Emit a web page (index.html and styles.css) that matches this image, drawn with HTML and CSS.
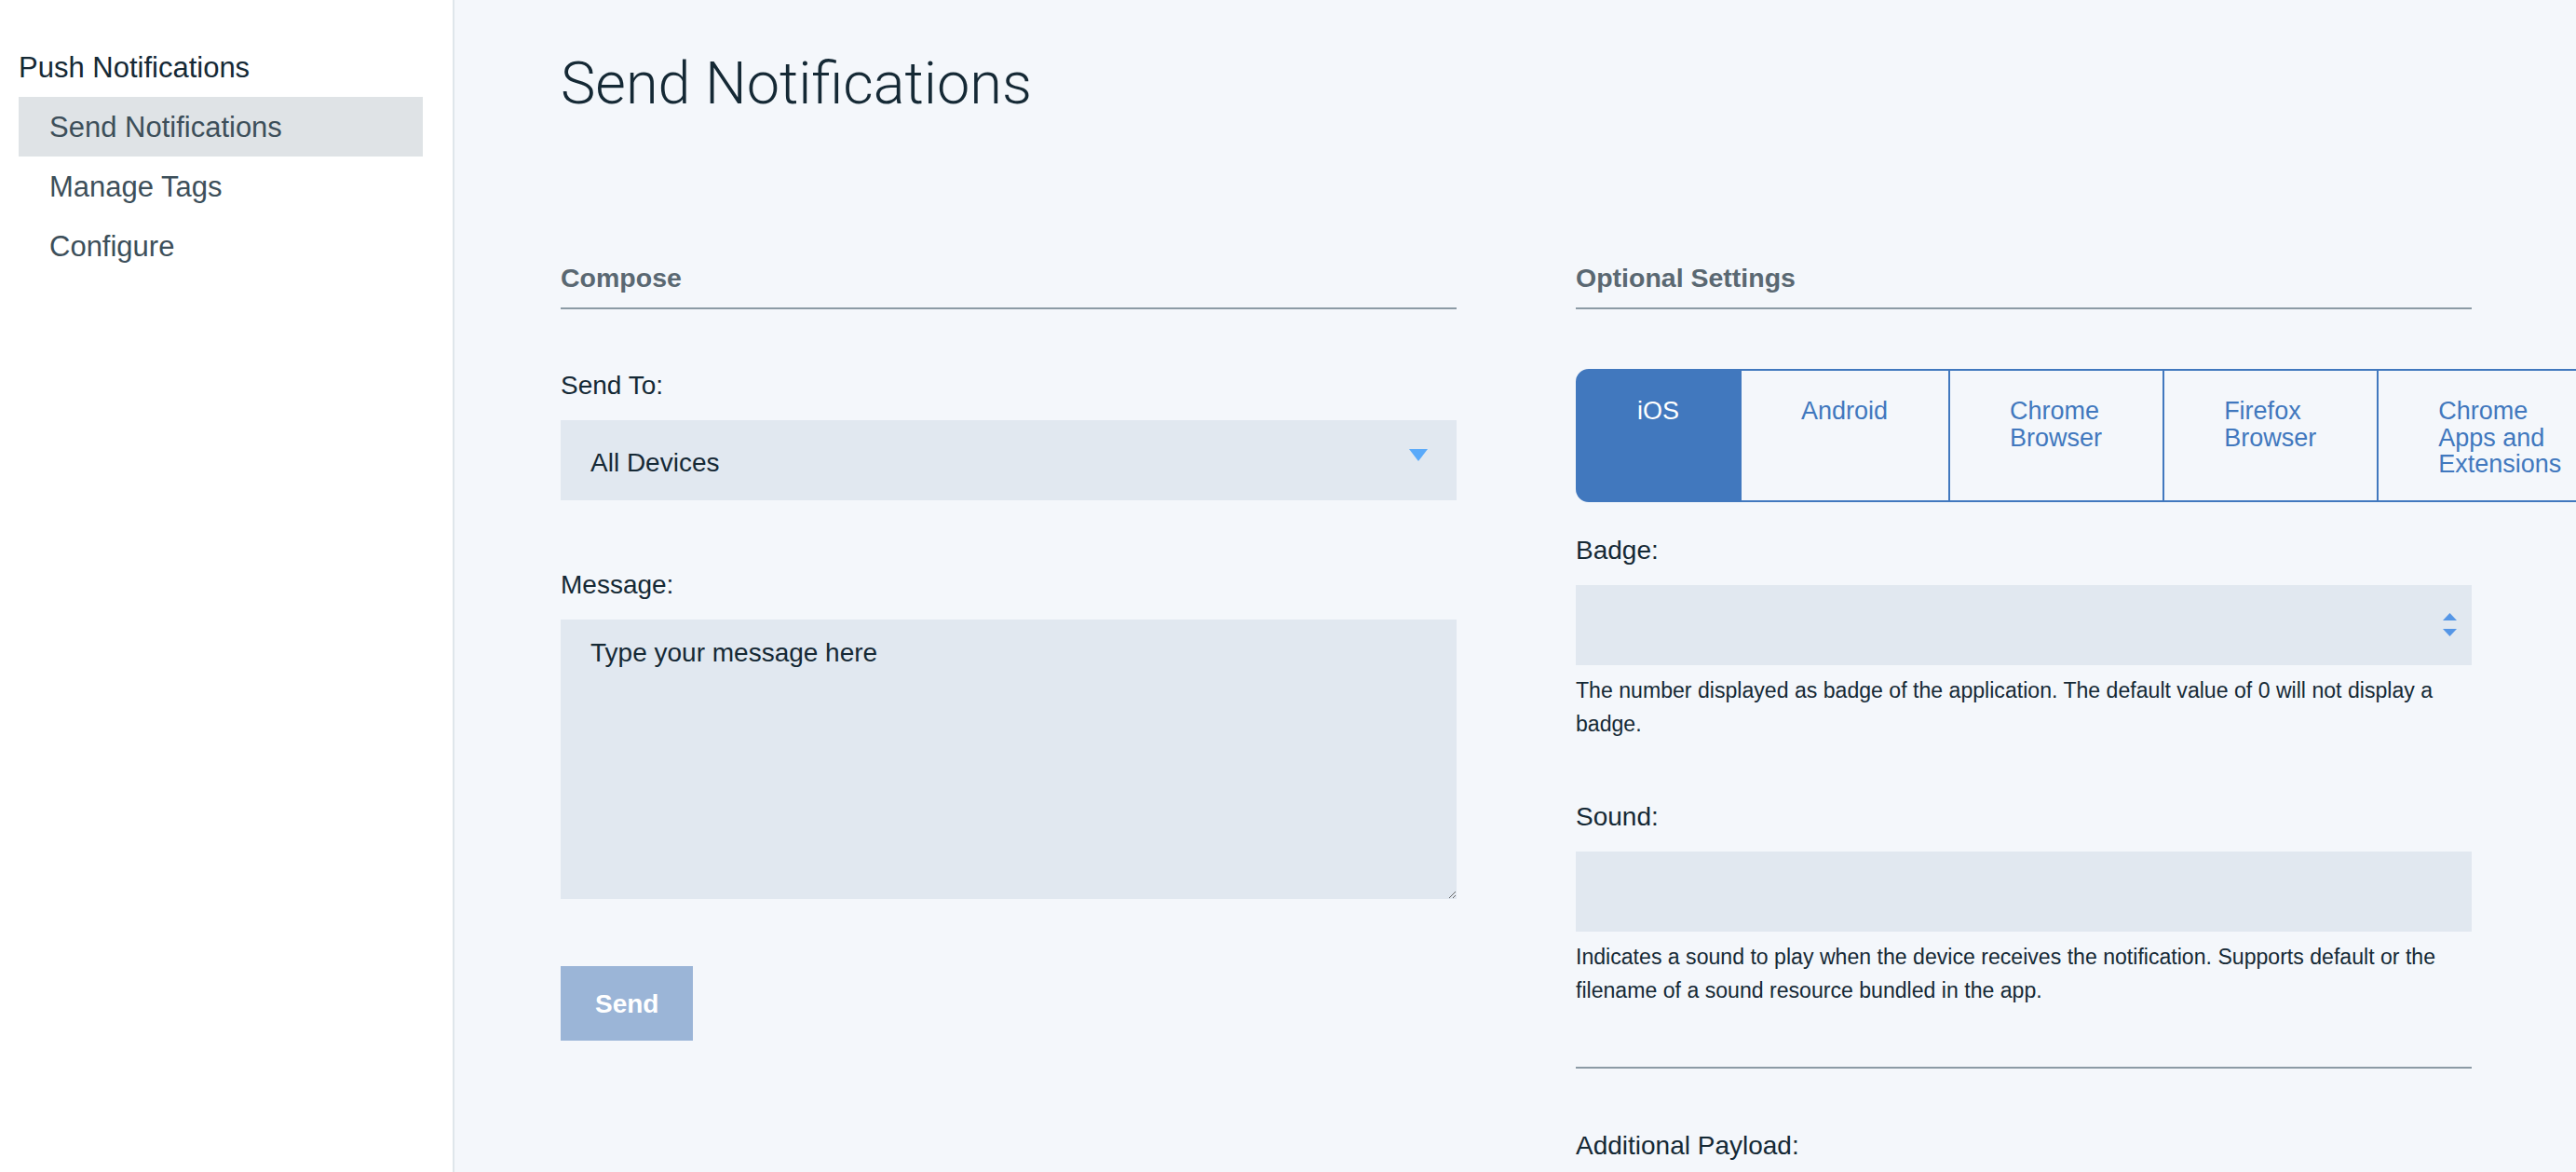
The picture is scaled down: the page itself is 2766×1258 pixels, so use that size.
FILE: index.html
```html
<!DOCTYPE html>
<html lang="en">
<head>
<meta charset="utf-8">
<title>Send Notifications</title>
<link rel="stylesheet" href="styles.css">
</head>
<body>
<div class="app">
  <nav class="sidebar">
    <div class="nav-title">Push Notifications</div>
    <ul class="nav-list">
      <li class="nav-item active">Send Notifications</li>
      <li class="nav-item">Manage Tags</li>
      <li class="nav-item">Configure</li>
    </ul>
  </nav>
  <main class="main">
    <h1 class="page-title">Send Notifications</h1>
    <div class="columns">
      <section class="col">
        <h2 class="section-head">Compose</h2>
        <div class="field first">
          <label class="field-label">Send To:</label>
          <div class="select">
            <span>All Devices</span>
            <svg class="caret" width="20" height="13" viewBox="0 0 20 13"><polygon points="0,0 20,0 10,13" fill="#5aaafa"/></svg>
          </div>
        </div>
        <div class="field spaced">
          <label class="field-label">Message:</label>
          <textarea class="textarea" placeholder="Type your message here"></textarea>
        </div>
        <button class="btn-send" disabled>Send</button>
      </section>
      <section class="col">
        <h2 class="section-head">Optional Settings</h2>
        <div class="tabs">
          <div class="tab selected"><span class="tab-label">iOS</span></div>
          <div class="tab"><span class="tab-label">Android</span></div>
          <div class="tab"><span class="tab-label">Chrome Browser</span></div>
          <div class="tab"><span class="tab-label">Firefox Browser</span></div>
          <div class="tab"><span class="tab-label">Chrome Apps and Extensions</span></div>
        </div>
        <div class="field after-tabs">
          <label class="field-label">Badge:</label>
          <div class="input-box">
            <input class="bare-input" type="text" aria-label="Badge">
            <svg class="spinner" width="15" height="25" viewBox="0 0 15 25"><polygon points="7.5,0 15,8 0,8" fill="#5596e6"/><polygon points="0,17 15,17 7.5,25" fill="#5596e6"/></svg>
          </div>
          <p class="help">The number displayed as badge of the application. The default value of 0 will not display a badge.</p>
        </div>
        <div class="field after-help">
          <label class="field-label">Sound:</label>
          <div class="input-box">
            <input class="bare-input" type="text" aria-label="Sound">
          </div>
          <p class="help">Indicates a sound to play when the device receives the notification. Supports default or the filename of a sound resource bundled in the app.</p>
        </div>
        <hr class="divider">
        <div class="field after-divider">
          <label class="field-label">Additional Payload:</label>
        </div>
      </section>
    </div>
  </main>
</div>
</body>
</html>
```

FILE: styles.css
```css
html {
  overflow: hidden;
}
body {
  margin: 0;
  font-family: "Liberation Sans", Arial, sans-serif;
  color: #152935;
  background: #f4f7fb;
}
.app {
  display: flex;
  min-height: 100vh;
}
.sidebar {
  flex: none;
  width: 488px;
  box-sizing: border-box;
  padding: 55px 32px 0 20px;
  background: #ffffff;
  border-right: 2px solid #dfe6eb;
}
.nav-title {
  font-size: 31px;
  line-height: 36px;
  color: #152935;
}
.nav-list {
  list-style: none;
  margin: 13px 0 0;
  padding: 0;
}
.nav-item {
  font-size: 31px;
  line-height: 62px;
  padding: 2px 0 0 33px;
  color: #3d4f5a;
}
.nav-item.active {
  background: #dfe3e6;
}
.main {
  flex: 1;
  min-width: 0;
  padding: 52px 0 0 114px;
}
.page-title {
  margin: 0 0 154px;
  font-family: Roboto, "Liberation Sans", sans-serif;
  font-weight: 300;
  font-size: 63px;
  line-height: 76px;
  color: #152935;
}
.columns {
  display: grid;
  grid-template-columns: 962px 962px;
  column-gap: 128px;
  align-items: start;
}
.section-head {
  margin: 0;
  font-size: 28.5px;
  line-height: 32px;
  font-weight: 700;
  color: #5a6872;
  padding-bottom: 16px;
  border-bottom: 2px solid #8c9ba5;
}
.field-label {
  display: block;
  font-size: 28px;
  line-height: 32px;
  color: #152935;
  padding-top: 1px;
  margin-bottom: 21px;
}
.field.first {
  margin-top: 65px;
}
.field.spaced {
  margin-top: 74px;
}
.select {
  height: 86px;
  box-sizing: border-box;
  background: #e1e8f0;
  display: flex;
  align-items: center;
  justify-content: space-between;
  padding: 5px 31px 0 32px;
  font-size: 28px;
  line-height: 32px;
  color: #152935;
}
.caret {
  display: block;
  margin-top: -16px;
}
.textarea {
  display: block;
  width: 100%;
  height: 300px;
  box-sizing: border-box;
  border: none;
  outline: none;
  background: #e1e8f0;
  padding: 20px 32px 14px;
  font-family: "Liberation Sans", Arial, sans-serif;
  font-size: 28px;
  line-height: 32px;
  color: #152935;
  margin: 0;
}
.textarea::placeholder {
  color: #152935;
  opacity: 1;
}
.btn-send {
  display: block;
  margin-top: 72px;
  border: none;
  background: #9bb5d7;
  color: #ffffff;
  font-family: "Liberation Sans", Arial, sans-serif;
  font-weight: 700;
  font-size: 28px;
  line-height: 32px;
  padding: 25px 37px 23px;
}
.tabs {
  display: flex;
  margin-top: 64px;
}
.tab {
  flex: none;
  padding: 29px 65px 24px 64px;
  border: 2px solid #4178be;
  border-left: none;
  font-size: 27px;
  line-height: 28.5px;
  color: #4178be;
  background: #f4f7fb;
}
.tab.selected {
  background: #4178be;
  color: #ffffff;
  border-left: 2px solid #4178be;
  border-radius: 14px 0 0 14px;
}
.tab-label {
  display: block;
  width: min-content;
}
.field.after-tabs {
  margin-top: 35px;
}
.field.after-help {
  margin-top: 65px;
}
.input-box {
  height: 86px;
  box-sizing: border-box;
  background: #e1e8f0;
  display: flex;
  align-items: center;
  padding: 0 16px 0 32px;
}
.bare-input {
  flex: 1;
  min-width: 0;
  border: none;
  outline: none;
  background: transparent;
  font-family: "Liberation Sans", Arial, sans-serif;
  font-size: 28px;
  color: #152935;
  padding: 0;
}
.spinner {
  display: block;
  flex: none;
}
.help {
  margin: 9px 0 0;
  font-size: 23.1px;
  line-height: 36px;
  color: #152935;
}
.divider {
  margin: 64px 0 0;
  border: none;
  border-top: 2px solid #8c9ba5;
  height: 0;
}
.field.after-divider {
  margin-top: 66px;
}
```
